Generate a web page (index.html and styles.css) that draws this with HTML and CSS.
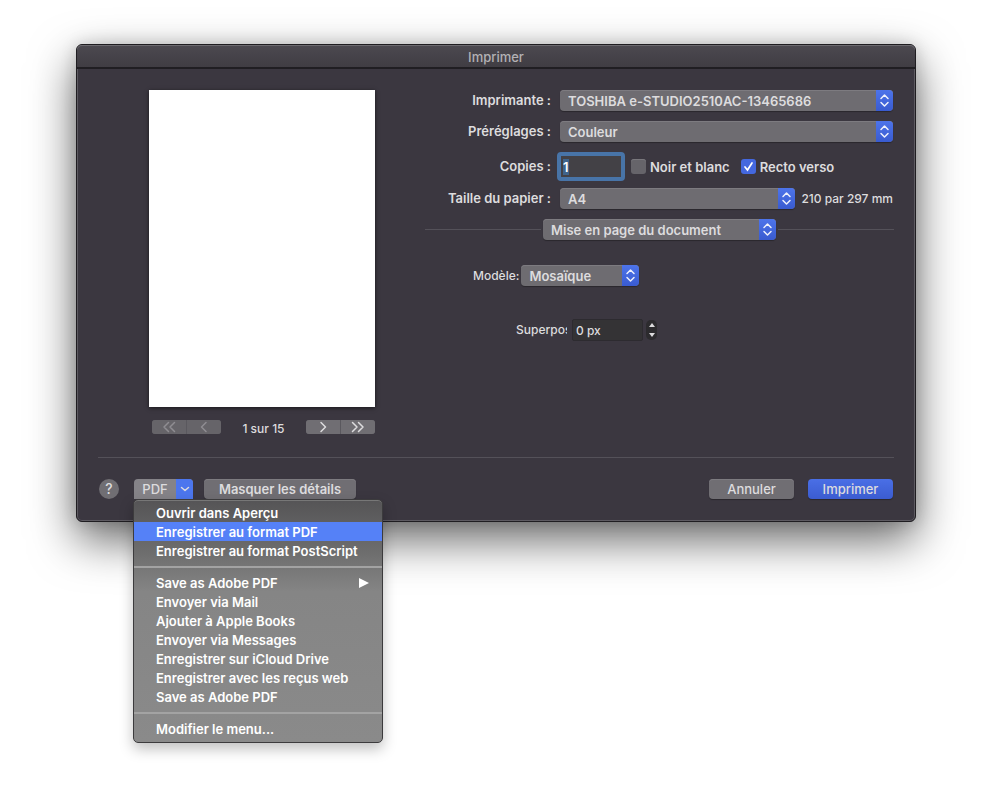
FILE: index.html
```html
<!DOCTYPE html>
<html lang="fr">

<head>
    <meta charset="UTF-8">
    <meta name="viewport" content="width=device-width, initial-scale=1.0">
    <title>Imprimer</title>
    <link rel="stylesheet" href="styles.css">
</head>

<body>
    <svg width="0" height="0" class="defs">
        <symbol id="updown" viewBox="0 0 17 20">
            <path d="M5 8 8.5 4.500 12 8M5 12l3.500 3.500L12 12" />
        </symbol>
    </svg>
    <main class="dialog">
        <h1 class="title-bar">Imprimer</h1>
        <div class="dialog-body">
            <div class="preview">
                <div class="paper"></div>
                <div class="pager">
                    <div class="pager-group">
                        <button class="pager-btn" disabled aria-label="Première page">
                            <svg viewBox="0 0 14 14"><path d="M6.500 2.500 2 7l4.500 4.500M12.500 2.500 8 7l4.500 4.500" /></svg>
                        </button>
                        <button class="pager-btn" disabled aria-label="Page précédente">
                            <svg viewBox="0 0 14 14"><path d="M9 2.500 4.500 7 9 11.500" /></svg>
                        </button>
                    </div>
                    <span class="pager-text">1 sur 15</span>
                    <div class="pager-group">
                        <button class="pager-btn" aria-label="Page suivante">
                            <svg viewBox="0 0 14 14"><path d="M5 2.500 9.500 7 5 11.500" /></svg>
                        </button>
                        <button class="pager-btn" aria-label="Dernière page">
                            <svg viewBox="0 0 14 14"><path d="M1.500 2.500 6 7l-4.500 4.500M7.500 2.500 12 7l-4.500 4.500" /></svg>
                        </button>
                    </div>
                </div>
            </div>
            <form class="settings">
                <div class="row">
                    <label class="label" for="printer">Imprimante :</label>
                    <div class="select">
                        <select id="printer"><option>TOSHIBA e-STUDIO2510AC-13465686</option></select>
                        <svg class="arrows"><use href="#updown" /></svg>
                    </div>
                </div>
                <div class="row">
                    <label class="label" for="preset">Préréglages :</label>
                    <div class="select">
                        <select id="preset"><option>Couleur</option></select>
                        <svg class="arrows"><use href="#updown" /></svg>
                    </div>
                </div>
                <div class="row row-copies">
                    <label class="label" for="copies">Copies :</label>
                    <div class="copies">
                        <input type="text" id="copies" class="copies-input" value="1" autofocus>
                        <label class="check"><input type="checkbox">Noir et blanc</label>
                        <label class="check"><input type="checkbox" checked>Recto verso</label>
                    </div>
                </div>
                <div class="row">
                    <label class="label" for="size">Taille du papier :</label>
                    <div class="paper-size">
                        <div class="select">
                            <select id="size"><option>A4</option></select>
                            <svg class="arrows"><use href="#updown" /></svg>
                        </div>
                        <span class="small">210 par 297 mm</span>
                    </div>
                </div>
                <div class="section">
                    <div class="select section-select">
                        <select aria-label="Section"><option>Mise en page du document</option></select>
                        <svg class="arrows"><use href="#updown" /></svg>
                    </div>
                </div>
                <div class="model">
                    <label class="small" for="model">Modèle:</label>
                    <div class="select">
                        <select id="model"><option>Mosaïque</option></select>
                        <svg class="arrows"><use href="#updown" /></svg>
                    </div>
                </div>
                <div class="overlap">
                    <label class="small overlap-label" for="overlap">Superpos</label>
                    <input type="text" id="overlap" class="overlap-input" value="0 px">
                    <div class="stepper">
                        <button type="button" aria-label="Augmenter"><svg viewBox="0 0 6 4"><path d="M0 4 3 0l3 4z" /></svg></button>
                        <button type="button" aria-label="Diminuer"><svg viewBox="0 0 6 4"><path d="M0 0h6L3 4z" /></svg></button>
                    </div>
                </div>
            </form>
        </div>
        <footer class="footer">
            <button class="help">?</button>
            <div class="pdf">
                <button class="pdf-btn">
                    <span class="pdf-text">PDF</span>
                    <span class="pdf-arrow"><svg viewBox="0 0 10 10"><path d="M1.500 3.500 5 6.500l3.500-3" /></svg></span>
                </button>
                <ul class="menu">
                    <li><button>Ouvrir dans Aperçu</button></li>
                    <li><button class="selected">Enregistrer au format PDF</button></li>
                    <li><button>Enregistrer au format PostScript</button></li>
                    <li class="separator"></li>
                    <li><button>Save as Adobe PDF <svg viewBox="0 0 10 10"><path d="M0 0l10 5-10 5z" /></svg></button></li>
                    <li><button>Envoyer via Mail</button></li>
                    <li><button>Ajouter à Apple Books</button></li>
                    <li><button>Envoyer via Messages</button></li>
                    <li><button>Enregistrer sur iCloud Drive</button></li>
                    <li><button>Enregistrer avec les reçus web</button></li>
                    <li><button>Save as Adobe PDF</button></li>
                    <li class="separator"></li>
                    <li><button>Modifier le menu...</button></li>
                </ul>
            </div>
            <button class="btn btn-details">Masquer les détails</button>
            <button class="btn btn-cancel">Annuler</button>
            <button class="btn btn-primary">Imprimer</button>
        </footer>
    </main>
    <script>
        document.getElementById('copies').focus();
        document.getElementById('copies').select();
    </script>
</body>

</html>
```
FILE: styles.css
```css
* {
    box-sizing: border-box;
}

body {
    min-height: 100vh;
    margin: 0;
    padding: 44px 73px 0 76px;
    background-color: #fff;
    color: #dddcde;
    font-family: Inter, "Liberation Sans", sans-serif;
    font-size: 13px;
    font-weight: 600;
    line-height: 20px;
}

button,
input,
select {
    margin: 0;
    padding: 0;
    border: 0;
    color: inherit;
    font: inherit;
}

.defs {
    position: absolute;
}

svg path {
    fill: none;
    stroke: currentColor;
    stroke-width: 1.5;
    stroke-linecap: round;
    stroke-linejoin: round;
}

.dialog {
    border: 1px solid #1f1d21;
    border-radius: 6px;
    background-color: #3b3740;
    box-shadow: inset 0 0 0 1px #5d5a61, 0 18px 46px rgba(0, 0, 0, 0.6), 0 0 16px rgba(0, 0, 0, 0.15);
}

.title-bar {
    height: 24px;
    margin: 0;
    border-bottom: 2px solid #201e22;
    border-radius: 5px 5px 0 0;
    background-image: linear-gradient(180deg, #4c4950 0%, #403d43 100%);
    box-shadow: inset 0 1px 0 #6c6a6f;
    color: #b3b1b5;
    font-size: 13px;
    font-weight: 500;
    line-height: 25px;
    text-align: center;
}

.dialog-body {
    display: grid;
    grid-template-columns: 327px 1fr;
    margin: 0 21px;
    padding: 21px 0 20px;
    border-bottom: 1px solid #545159;
}

.preview {
    width: 226px;
    margin-left: 51px;
}

.paper {
    aspect-ratio: 226 / 317;
    background-color: #fff;
    box-shadow: 0 1px 4px rgba(0, 0, 0, 0.6);
}

.pager {
    display: flex;
    justify-content: space-between;
    margin: 13px 0 0 3px;
}

.pager-group {
    display: flex;
    gap: 1px;
    height: 14px;
    border-radius: 3px;
    overflow: hidden;
    background-color: #5a585e;
}

.pager-btn {
    display: flex;
    align-items: center;
    justify-content: center;
    width: 34px;
    background-color: #706e73;
}

.pager-btn:disabled {
    background-color: #666469;
    color: #8f8d92;
}

.pager-btn svg {
    width: 14px;
    height: 14px;
}

.small,
.pager-text {
    font-size: 12px;
    font-weight: 500;
}

.pager-text {
    line-height: 17px;
}

.row {
    display: grid;
    grid-template-columns: 126px 1fr;
    gap: 9px;
    align-items: center;
    margin-bottom: 10px;
    padding-right: 1px;
}

.row-copies {
    margin: 13px 0 10px;
}

.label {
    line-height: 21px;
    text-align: right;
}

.select {
    display: grid;
    grid-template-columns: 1fr 17px;
    height: 21px;
    border-radius: 4px;
    overflow: hidden;
    background-color: #6e6c71;
    box-shadow: inset 0 1px 0 #7d7b80, 0 1px 1px rgba(0, 0, 0, 0.3);
}

.select select {
    grid-area: 1 / 1 / 2 / 3;
    padding-left: 8px;
    appearance: none;
    background: transparent;
    outline: none;
}

.arrows {
    grid-area: 1 / 2;
    width: 17px;
    height: 21px;
    background-image: linear-gradient(180deg, #4d74ea 0%, #395bd0 100%);
    color: #eef1fc;
    pointer-events: none;
}

.copies,
.paper-size {
    display: flex;
    align-items: center;
}

.copies-input {
    width: 62px;
    height: 23px;
    margin-right: 9px;
    padding-left: 3px;
    border-radius: 1px;
    outline: 4px solid #4874a8;
    outline-offset: -1px;
    background-color: #434146;
    color: #fff;
}

.copies-input::selection {
    background-color: #3f638b;
    color: #fff;
}

.check {
    display: flex;
    align-items: center;
    gap: 4px;
    margin-right: 11px;
    white-space: nowrap;
}

.check input {
    width: 15px;
    height: 15px;
    border-radius: 3px;
    appearance: none;
    background-color: #66646a;
    box-shadow: inset 0 1px 0 #79777c;
}

.check input:checked {
    background: url("data:image/svg+xml,%3Csvg xmlns='http://www.w3.org/2000/svg' viewBox='0 0 15 15'%3E%3Cpath d='M4 8l2.500 3L11 4' fill='none' stroke='white' stroke-width='1.700' stroke-linecap='round'/%3E%3C/svg%3E") #4468df;
    box-shadow: none;
}

.paper-size {
    justify-content: space-between;
}

.paper-size .select {
    width: 235px;
}

.section {
    display: flex;
    align-items: center;
    gap: 2px;
}

.section::before,
.section::after {
    content: "";
    flex: 1;
    height: 1px;
    background-color: #545159;
}

.section-select {
    width: 233px;
}

.model {
    display: flex;
    align-items: center;
    gap: 2px;
    margin: 25px 0 0 48px;
}

.model .select {
    width: 118px;
}

.overlap {
    display: flex;
    align-items: center;
    margin: 33px 0 0 91px;
}

.overlap-label {
    width: 51px;
    margin-right: 5px;
    overflow: hidden;
    white-space: nowrap;
}

.overlap-input {
    width: 71px;
    height: 22px;
    margin-right: 3px;
    padding-left: 3px;
    border: 1px solid #2d2b30;
    border-radius: 2px;
    background-color: #343335;
    font-size: 12px;
    font-weight: 500;
}

.stepper {
    display: flex;
    flex-direction: column;
    width: 11px;
    height: 20px;
    border-radius: 5px;
    overflow: hidden;
    background-color: #2c2b2e;
}

.stepper button {
    display: flex;
    flex: 1;
    align-items: center;
    justify-content: center;
    background: transparent;
}

.stepper svg {
    width: 6px;
    height: 4px;
}

.stepper path,
.menu path {
    fill: currentColor;
    stroke: none;
}

.footer {
    display: flex;
    align-items: center;
    padding: 21px 22px 22px;
}

.help {
    width: 20px;
    height: 20px;
    margin-right: 15px;
    border-radius: 50%;
    background-color: #706e73;
    font-size: 14px;
    font-weight: 500;
}

.pdf {
    position: relative;
    margin-right: 11px;
}

.pdf-btn {
    display: flex;
    height: 20px;
    border-radius: 4px 4px 0 0;
    overflow: hidden;
    background-color: #858388;
    font-weight: 500;
}

.pdf-text {
    width: 42px;
    line-height: 21px;
}

.pdf-arrow {
    display: flex;
    align-items: center;
    justify-content: center;
    width: 17px;
    background-color: #4c76ee;
}

.pdf-arrow svg {
    width: 10px;
    height: 10px;
}

.menu {
    position: absolute;
    top: 20px;
    left: -1px;
    z-index: 1;
    width: 250px;
    margin: 0;
    padding: 3px 0 4px;
    border: 1px solid #3c3b3d;
    border-radius: 5px;
    background-image: linear-gradient(180deg, #555456 0%, #6e6e6e 22%, #858585 38%, #8a8a8a 100%);
    box-shadow: inset 0 1px 0 #777, 0 6px 14px rgba(0, 0, 0, 0.25);
    list-style: none;
}

.menu button {
    display: flex;
    align-items: center;
    justify-content: space-between;
    width: 100%;
    height: 19px;
    padding: 0 13px 0 22px;
    background: transparent;
    color: #fff;
    text-align: left;
}

.menu .selected {
    background-color: #5581f7;
}

.menu svg {
    width: 10px;
    height: 10px;
}

.separator {
    height: 13px;
    padding-top: 6px;
}

.separator::before {
    content: "";
    display: block;
    height: 2px;
    background-color: #a3a3a3;
}

.btn {
    height: 20px;
    border-radius: 4px;
    background-color: #706e73;
    box-shadow: inset 0 1px 0 #7d7b80, 0 1px 1px rgba(0, 0, 0, 0.3);
}

.btn-details {
    width: 152px;
    margin-right: auto;
}

.btn-cancel,
.btn-primary {
    width: 85px;
    font-weight: 500;
}

.btn-primary {
    margin-left: 14px;
    background-image: linear-gradient(180deg, #4a6fe6 0%, #3b5cd0 100%);
    box-shadow: 0 1px 1px rgba(0, 0, 0, 0.3);
}
```
